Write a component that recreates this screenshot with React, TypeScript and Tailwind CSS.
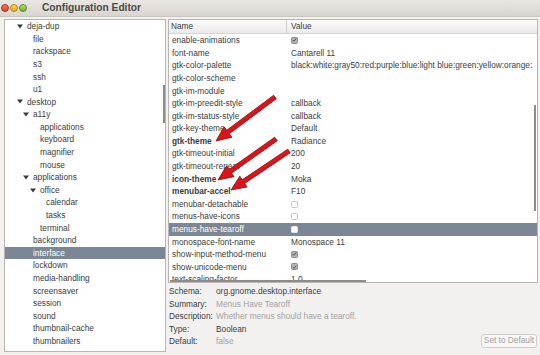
import React from 'react'

// ─── Data ───────────────────────────────────────────────────────────────

type TreeRow = { label: string; level: number; expander?: boolean; selected?: boolean }

const tree: TreeRow[] = [
  { label: 'deja-dup', level: 0, expander: true },
  { label: 'file', level: 1 },
  { label: 'rackspace', level: 1 },
  { label: 's3', level: 1 },
  { label: 'ssh', level: 1 },
  { label: 'u1', level: 1 },
  { label: 'desktop', level: 0, expander: true },
  { label: 'a11y', level: 1, expander: true },
  { label: 'applications', level: 2 },
  { label: 'keyboard', level: 2 },
  { label: 'magnifier', level: 2 },
  { label: 'mouse', level: 2 },
  { label: 'applications', level: 1, expander: true },
  { label: 'office', level: 2, expander: true },
  { label: 'calendar', level: 3 },
  { label: 'tasks', level: 3 },
  { label: 'terminal', level: 2 },
  { label: 'background', level: 1 },
  { label: 'interface', level: 1, selected: true },
  { label: 'lockdown', level: 1 },
  { label: 'media-handling', level: 1 },
  { label: 'screensaver', level: 1 },
  { label: 'session', level: 1 },
  { label: 'sound', level: 1 },
  { label: 'thumbnail-cache', level: 1 },
  { label: 'thumbnailers', level: 1 },
]

// indent before the expander column, per level
const indent = ['w-[12px]', 'w-[18px]', 'w-[25px]', 'w-[31px]']

type Val = string | { check: boolean }
type KeyRow = { name: string; value: Val; bold?: boolean; selected?: boolean }

const keys: KeyRow[] = [
  { name: 'enable-animations', value: { check: true } },
  { name: 'font-name', value: 'Cantarell 11' },
  { name: 'gtk-color-palette', value: 'black:white:gray50:red:purple:blue:light blue:green:yellow:orange:' },
  { name: 'gtk-color-scheme', value: '' },
  { name: 'gtk-im-module', value: '' },
  { name: 'gtk-im-preedit-style', value: 'callback' },
  { name: 'gtk-im-status-style', value: 'callback' },
  { name: 'gtk-key-theme', value: 'Default' },
  { name: 'gtk-theme', value: 'Radiance', bold: true },
  { name: 'gtk-timeout-initial', value: '200' },
  { name: 'gtk-timeout-repeat', value: '20' },
  { name: 'icon-theme', value: 'Moka', bold: true },
  { name: 'menubar-accel', value: 'F10', bold: true },
  { name: 'menubar-detachable', value: { check: false } },
  { name: 'menus-have-icons', value: { check: false } },
  { name: 'menus-have-tearoff', value: { check: false }, selected: true },
  { name: 'monospace-font-name', value: 'Monospace 11' },
  { name: 'show-input-method-menu', value: { check: true } },
  { name: 'show-unicode-menu', value: { check: true } },
  { name: 'text-scaling-factor', value: '1.0' },
]

const details: [string, string, boolean][] = [
  ['Schema:', 'org.gnome.desktop.interface', false],
  ['Summary:', 'Menus Have Tearoff', true],
  ['Description:', 'Whether menus should have a tearoff.', true],
  ['Type:', 'Boolean', false],
  ['Default:', 'false', true],
]

// ─── Pieces ─────────────────────────────────────────────────────────────

function Expander({ light }: { light?: boolean }) {
  return (
    <svg width="6" height="5" viewBox="0 0 6 5" className="mr-[4px] shrink-0">
      <path d="M0 0.5 L6 0.5 L3 4.5 Z" fill={light ? '#ffffff' : '#3a3a3a'} />
    </svg>
  )
}

function Check({ on, selected }: { on: boolean; selected?: boolean }) {
  if (on) {
    return (
      <div className="flex h-[7px] w-[7px] items-center justify-center rounded-[1.5px] border border-[#8a8a8a] bg-[#b4b4b4]">
        <svg width="6" height="6" viewBox="0 0 6 6">
          <path d="M1 3 L2.5 4.5 L5 1.2" stroke="#555555" strokeWidth="1.2" fill="none" />
        </svg>
      </div>
    )
  }
  return (
    <div
      className={
        selected
          ? 'h-[7px] w-[7px] rounded-[1.5px] border border-[#e8e8e8] bg-white'
          : 'h-[7px] w-[7px] rounded-[1.5px] border border-[#c4c4c4] bg-white'
      }
    />
  )
}

// red annotation arrow, computed from start to tip
function arrowPoints(sx: number, sy: number, tx: number, ty: number) {
  const dx = tx - sx
  const dy = ty - sy
  const len = Math.hypot(dx, dy)
  const ux = dx / len
  const uy = dy / len
  const px = -uy
  const py = ux
  const head = 15
  const hw = 6.5
  const sw = 2.2
  const bx = tx - ux * head
  const by = ty - uy * head
  const pts = [
    [sx + px * sw, sy + py * sw],
    [bx + px * sw, by + py * sw],
    [bx + px * hw, by + py * hw],
    [tx, ty],
    [bx - px * hw, by - py * hw],
    [bx - px * sw, by - py * sw],
    [sx - px * sw, sy - py * sw],
  ]
  return pts.map((p) => p.join(',')).join(' ')
}

const arrows = [
  [275, 97, 216, 141],
  [276, 139, 218, 180],
  [289, 151, 231, 190],
]

// ─── App ────────────────────────────────────────────────────────────────

export default function App() {
  return (
    <div
      className="relative flex h-[355px] w-[540px] flex-col overflow-hidden bg-[#f2f1f0] text-[8.3px] leading-none text-[#3c3c3c]"
      style={{ fontFamily: '"Liberation Sans", Arial, sans-serif' }}
    >
      {/* Title bar */}
      <div className="flex h-[17px] shrink-0 items-center border-b border-[#c9c6c0] bg-gradient-to-b from-[#e9e7e3] to-[#d8d5cf] pl-[1px]">
        <div className="flex items-center gap-[1px]">
          <div className="h-[8px] w-[8px] rounded-full border border-[#a8331d] bg-gradient-to-b from-[#f47a5c] to-[#d9412a]" />
          <div className="h-[8px] w-[8px] rounded-full border border-[#b7860e] bg-gradient-to-b from-[#fbd45a] to-[#e9a520]" />
          <div className="h-[8px] w-[8px] rounded-full border border-[#5a8c1f] bg-gradient-to-b from-[#b5e06e] to-[#6fae2c]" />
        </div>
        <div className="ml-[15px] text-[10.2px] font-bold text-[#4a4a48]">Configuration Editor</div>
      </div>

      {/* Body */}
      <div className="flex min-h-0 flex-1 pl-[4px] pr-[2px] pt-[2px] pb-[3px]">
        {/* Tree */}
        <div className="relative w-[162px] shrink-0 overflow-hidden border border-[#b9b6b0] bg-white">
          {tree.map((r, i) => (
            <div
              key={i}
              className={
                r.selected
                  ? 'flex h-[12.6px] items-center bg-[#7b8795] text-white'
                  : 'flex h-[12.6px] items-center'
              }
            >
              <span className={`${indent[r.level]} shrink-0`} />
              {r.expander ? <Expander light={r.selected} /> : <span className="w-[10px] shrink-0" />}
              <span>{r.label}</span>
            </div>
          ))}
          <div className="absolute left-[158px] top-[65px] h-[38px] w-[2px] bg-[#8c8c8c]" />
        </div>

        {/* Right side */}
        <div className="ml-[2px] flex min-w-0 flex-1 flex-col">
          {/* Keys table */}
          <div className="relative h-[264px] shrink-0 overflow-hidden border border-[#b9b6b0] bg-white">
            <div className="flex h-[14px] items-center border-b border-[#d6d4d0] bg-gradient-to-b from-[#fbfbfa] to-[#ebeae8]">
              <div className="flex h-full w-[118px] items-center border-r border-[#d0cecb] pl-[2px]">Name</div>
              <div className="pl-[4px]">Value</div>
            </div>
            {keys.map((k, i) => (
              <div
                key={i}
                className={
                  k.selected
                    ? 'flex h-[12.6px] items-center bg-[#7b8795] text-white'
                    : 'flex h-[12.6px] items-center'
                }
              >
                <div className={k.bold ? 'w-[122px] shrink-0 pl-[3px] font-bold' : 'w-[122px] shrink-0 pl-[3px]'}>
                  {k.name}
                </div>
                <div className="min-w-0 flex-1 overflow-hidden whitespace-nowrap">
                  {typeof k.value === 'string' ? k.value : <Check on={k.value.check} selected={k.selected} />}
                </div>
              </div>
            ))}
            <div className="absolute bottom-[0px] left-[1px] h-[2px] w-[196px] bg-[#8c8c8c]" />
            <div className="absolute right-[1px] top-[85px] h-[106px] w-[2px] bg-[#8c8c8c]" />
          </div>

          {/* Details */}
          <div className="flex flex-1 flex-col pl-[1px] pt-[2px]">
            {details.map(([label, value, faded]) => (
              <div key={label} className="flex h-[12.5px] items-center">
                <div className="w-[47px] shrink-0">{label}</div>
                <div className={faded ? 'text-[#a3a3a1]' : 'text-[#3c3c3c]'}>{value}</div>
              </div>
            ))}
            <div className="-mt-[14px] flex justify-end pr-[1px]">
              <div className="flex h-[14px] w-[56px] items-center justify-center whitespace-nowrap rounded-[3px] border border-[#cfcdca] bg-[#f7f7f6] text-[#a0a09e]">
                Set to Default
              </div>
            </div>
          </div>
        </div>
      </div>

      {/* Annotation arrows */}
      <svg className="pointer-events-none absolute left-0 top-0" width="540" height="355">
        {arrows.map(([sx, sy, tx, ty], i) => (
          <polygon
            key={i}
            points={arrowPoints(sx, sy, tx, ty)}
            fill="#dc1319"
            stroke="#8a0b0b"
            strokeWidth="0.8"
            strokeLinejoin="round"
          />
        ))}
      </svg>
    </div>
  )
}
